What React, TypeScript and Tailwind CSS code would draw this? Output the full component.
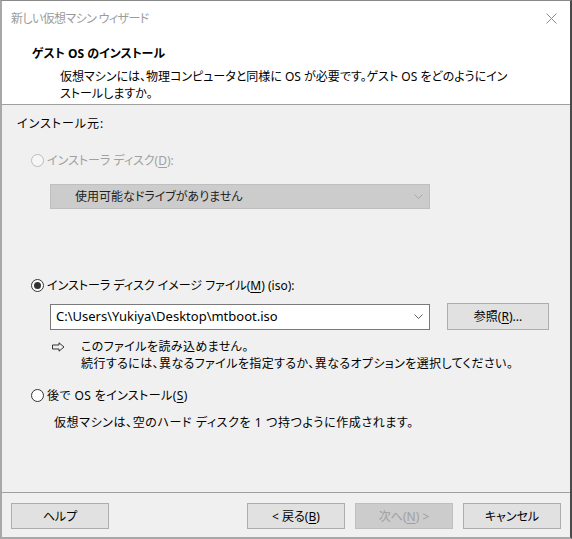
import React from 'react';

const font = "font-['Noto_Sans','Noto_Sans_CJK_JP',sans-serif] [font-feature-settings:'palt']";

const Key: React.FC<{ children: React.ReactNode }> = ({ children }) => (
  <span className="underline underline-offset-2">{children}</span>
);

const Radio: React.FC<{ checked?: boolean; disabled?: boolean }> = ({ checked, disabled }) => (
  <span
    className={`flex h-[13px] w-[13px] shrink-0 items-center justify-center rounded-full border ${
      disabled ? 'border-[#bcbcbc] bg-[#f6f6f6]' : 'border-[#333333] bg-white'
    }`}
  >
    {checked && <span className="h-[7px] w-[7px] rounded-full bg-[#333333]" />}
  </span>
);

const Chevron: React.FC<{ color: string }> = ({ color }) => (
  <svg width="9" height="5" viewBox="0 0 9 5" className="shrink-0">
    <path d="M0.5 0.5 L4.5 4.5 L8.5 0.5" fill="none" stroke={color} strokeWidth="1" />
  </svg>
);

const Button: React.FC<{ children: React.ReactNode; disabled?: boolean; className?: string }> = ({
  children,
  disabled,
  className = '',
}) => (
  <div
    className={`flex h-[26px] w-[98px] items-center justify-center border ${
      disabled ? 'border-[#bfbfbf] bg-[#cccccc] text-[#a0a0a0]' : 'border-[#adadad] bg-[#e1e1e1] text-black'
    } ${className}`}
  >
    {children}
  </div>
);

export default function App() {
  return (
    <div
      className={`flex h-[539px] w-[572px] flex-col border-t border-l-2 border-r-2 border-b-2 border-t-[#8a8a8a] border-l-[#a8a8a8] border-r-[#4a4a4a] border-b-[#a8a8a8] bg-[#f0f0f0] text-[12px] leading-[17px] text-black ${font}`}
    >
      {/* title bar + header */}
      <div className="border-b border-[#a0a0a0] bg-white">
        <div className="flex h-[34px] items-center justify-between pl-[9px] pr-[13px]">
          <span className="tracking-[-0.6px] text-[#9b9b9b]">新しい仮想マシン ウィザード</span>
          <svg width="11" height="11" viewBox="0 0 11 11">
            <path d="M0.5 0.5 L10.5 10.5 M10.5 0.5 L0.5 10.5" stroke="#8a8a8a" strokeWidth="1" />
          </svg>
        </div>
        <div className="pb-[2px] pl-[30px] pt-[10px]">
          <div className="font-bold">ゲスト OS のインストール</div>
          <p className="mt-[6px] pl-[28px]">
            仮想マシンには、物理コンピュータと同様に OS が必要です。ゲスト OS をどのようにイン
            <br />
            ストールしますか。
          </p>
        </div>
      </div>

      {/* body */}
      <div className="flex flex-1 flex-col pl-[15px] pt-[10px]">
        <div className="tracking-[1px]">インストール元:</div>

        <div className="ml-[14px] mt-[20px] flex items-center gap-[3px] text-[#a0a0a0]">
          <Radio disabled />
          <span>
            インストーラ ディスク(<Key>D</Key>):
          </span>
        </div>

        <div className="ml-[33px] mt-[15px] flex h-[25px] w-[380px] items-center justify-between border border-[#bfbfbf] bg-[#cccccc] pl-[24px] pr-[6px] text-[#222222]">
          <span>使用可能なドライブがありません</span>
          <Chevron color="#a8a8a8" />
        </div>

        <div className="ml-[14px] mt-[68px] flex items-center gap-[3px]">
          <Radio checked />
          <span>
            インストーラ ディスク イメージ ファイル(<Key>M</Key>) (iso):
          </span>
        </div>

        <div className="ml-[33px] mt-[9px] flex items-center gap-[17px]">
          <div className="flex h-[26px] w-[380px] items-center justify-between border border-[#7a7a7a] bg-white pl-[5px] pr-[6px]">
            <span className="text-[13px]">C:\Users\Yukiya\Desktop\mtboot.iso</span>
            <Chevron color="#606060" />
          </div>
          <Button className="h-[27px] w-[102px]">
            参照(<Key>R</Key>)...
          </Button>
        </div>

        <div className="ml-[35px] mt-[8px] flex items-start gap-[16px]">
          <svg width="13" height="10" viewBox="0 0 13 10" className="mt-[4px] shrink-0">
            <path d="M0.5 3 H7 V0.8 L12 5 L7 9.2 V7 H0.5 Z" fill="none" stroke="#333333" strokeWidth="1" />
          </svg>
          <div className="tracking-[0.4px]">
            <div>このファイルを読み込めません。</div>
            <div>続行するには、異なるファイルを指定するか、異なるオプションを選択してください。</div>
          </div>
        </div>

        <div className="ml-[14px] mt-[15px] flex items-center gap-[3px]">
          <Radio />
          <span className="tracking-[0.4px]">
            後で OS をインストール(<Key>S</Key>)
          </span>
        </div>

        <div className="ml-[37px] mt-[10px] tracking-[0.6px]">
          仮想マシンは、空のハード ディスクを 1 つ持つように作成されます。
        </div>
      </div>

      {/* footer */}
      <div className="flex h-[45px] items-start border-t border-[#a0a0a0] pl-[9px] pr-[9px] pt-[10px]">
        <Button>ヘルプ</Button>
        <div className="ml-auto flex gap-[10px]">
          <Button>
            &lt; 戻る(<Key>B</Key>)
          </Button>
          <Button disabled>
            次へ(<Key>N</Key>) &gt;
          </Button>
          <Button>キャンセル</Button>
        </div>
      </div>
    </div>
  );
}
